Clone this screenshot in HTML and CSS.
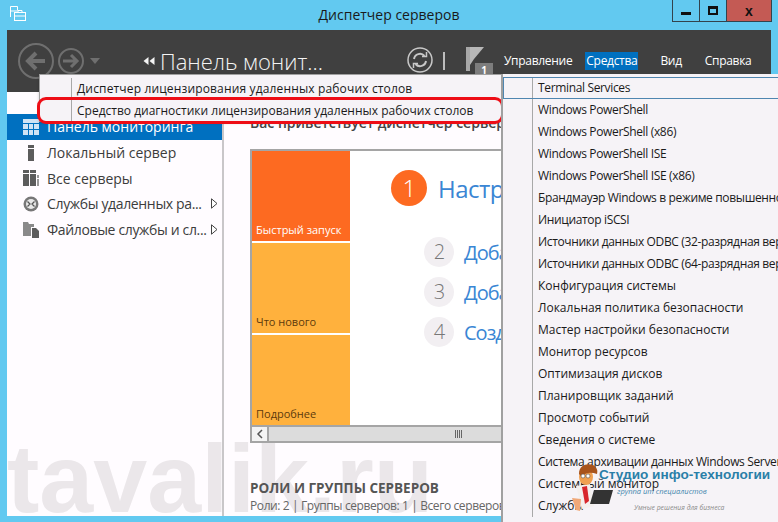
FILE: index.html
```html
<!DOCTYPE html>
<html lang="ru">
<head>
    <meta charset="UTF-8">
    <title>Диспетчер серверов</title>
    <link rel="stylesheet" href="styles.css">
</head>
<body>
    <!-- TITLE BAR -->
    <div class="titlebar">
        <svg class="app-icon" width="17" height="17" viewBox="0 0 17 17" fill="none" stroke="#fff" stroke-width="1">
            <path d="M1.500 12V1.500h7v4"/>
            <path d="M1.500 6h7"/>
            <rect x="5.500" y="7.500" width="11" height="8" fill="#62c9f0"/>
            <path d="M9 7.500V5.500h4v2M5.500 11h11"/>
        </svg>
        <div class="title">Диспетчер серверов</div>
        <div class="win-buttons">
            <div class="win-btn"><span class="ico-min"></span></div>
            <div class="win-btn"><span class="ico-max"></span></div>
            <div class="win-btn win-close">x</div>
        </div>
    </div>

    <div class="window">
        <!-- HEADER -->
        <div class="header">
            <svg class="nav-arrows" width="92" height="40" viewBox="0 0 92 40" fill="none" stroke="#6f6f6f">
                <circle cx="18" cy="20" r="17" stroke-width="2"/>
                <path d="M27 20H11M18 12l-8 8 8 8" stroke-width="4"/>
                <circle cx="53" cy="20" r="12" stroke-width="2"/>
                <path d="M45 20h14M53 14l6 6-6 6" stroke-width="3"/>
                <path d="M72 17h10l-5 6z" fill="#6f6f6f" stroke="none"/>
            </svg>
            <svg class="crumb-arrows" width="12" height="8" viewBox="0 0 12 8" fill="#f4f4f4">
                <path d="M5 0v8L0 4zM11 0v8L6 4z"/>
            </svg>
            <div class="crumb">Панель монит...</div>
            <svg class="refresh" width="26" height="26" viewBox="0 0 26 26" fill="none" stroke="#c8c8c8">
                <circle cx="13" cy="13" r="12" stroke-width="1.500"/>
                <path d="M7 12a6 6 0 0 1 10.500-3M19 14a6 6 0 0 1-10.500 3" stroke-width="2"/>
                <path d="M15 9.500h4.500V5M11 16.500H6.500V21" stroke-width="1.500"/>
            </svg>
            <div class="divider"></div>
            <div class="flag">
                <svg width="18" height="26" viewBox="0 0 18 26">
                    <path d="M0 0h4v24H0z" fill="#a8a8a8"/>
                    <path d="M4 0h14L8 12 4 18z" fill="#b8b8b8"/>
                </svg>
                <span class="flag-badge">1</span>
            </div>
            <div class="top-menu">
                <span>Управление</span>
                <span class="active">Средства</span>
                <span>Вид</span>
                <span>Справка</span>
            </div>
        </div>

        <div class="body">
            <div class="watermark">tavalik.ru</div>

            <!-- SIDEBAR -->
            <div class="sidebar">
                <div class="side-item selected">
                    <svg width="16" height="16" viewBox="0 0 16 16" fill="#cfe3f5"><path d="M0 0h16v4H0zM0 5h5v5H0zM6 5h4v5H6zM11 5h5v5h-5zM0 11h5v5H0zM6 11h4v5H6zM11 11h5v5h-5z"/></svg>
                    <span>Панель мониторинга</span>
                </div>
                <div class="side-item">
                    <svg width="16" height="16" viewBox="0 0 16 16" fill="#5c5c5c"><path d="M5 0h6v3H5zM5 4h6v12H5z"/></svg>
                    <span>Локальный сервер</span>
                </div>
                <div class="side-item">
                    <svg width="16" height="16" viewBox="0 0 16 16" fill="#5c5c5c"><path d="M0 0h6v3H0zM0 4h6v12H0zM7 0h6v3H7zM7 4h6v12H7z"/><path d="M14 5h2v3h-2zM14 9h2v7h-2z" fill="#999"/></svg>
                    <span>Все серверы</span>
                </div>
                <div class="side-item">
                    <svg width="16" height="16" viewBox="0 0 16 16"><circle cx="8" cy="8" r="7.500" fill="#777"/><circle cx="8" cy="8" r="5" fill="#e8e8e8"/><path d="M4.500 5.500L7 8l-2.500 2.500M11.500 5.500L9 8l2.500 2.500" fill="none" stroke="#555" stroke-width="1.300"/></svg>
                    <span class="side-label">Службы удаленных ра...</span>
                    <svg class="side-arrow" width="7" height="11" viewBox="0 0 7 11" fill="#fff" stroke="#444"><path d="M.5 .8v9.400L6 5.500z"/></svg>
                </div>
                <div class="side-item">
                    <svg width="16" height="16" viewBox="0 0 16 16"><path d="M0 0h5l1 2h5v3H8v9H0z" fill="#8a8a8a"/><path d="M9 6h4l3 3v7H9z" fill="#5c5c5c"/></svg>
                    <span class="side-label">Файловые службы и сл...</span>
                    <svg class="side-arrow" width="7" height="11" viewBox="0 0 7 11" fill="#fff" stroke="#444"><path d="M.5 .8v9.400L6 5.500z"/></svg>
                </div>
            </div>

            <!-- MAIN -->
            <div class="main">
                <div class="welcome">Вас приветствует диспетчер серверов</div>
                <div class="panel">
                    <div class="panel-inner">
                        <div class="tiles">
                            <div class="tile tile-orange">Быстрый запуск</div>
                            <div class="tile tile-yellow">Что нового</div>
                            <div class="tile tile-yellow">Подробнее</div>
                        </div>
                        <div class="steps">
                            <div class="step step-main"><b>1</b><span>Настроить этот</span></div>
                            <div class="step"><b>2</b><span>Добавить роли</span></div>
                            <div class="step"><b>3</b><span>Добавить</span></div>
                            <div class="step"><b>4</b><span>Создать группу</span></div>
                        </div>
                    </div>
                    <div class="hscroll">
                        <div class="hscroll-btn">
                            <svg width="8" height="10" viewBox="0 0 8 10" fill="none" stroke="#555" stroke-width="1.500"><path d="M6 1L2 5l4 4"/></svg>
                        </div>
                        <div class="hscroll-grip"><i></i><i></i><i></i><i></i></div>
                    </div>
                </div>
                <div class="roles-title">РОЛИ И ГРУППЫ СЕРВЕРОВ</div>
                <div class="roles-sub">Роли: 2 | Группы серверов: 1 | Всего серверов: 1</div>
            </div>
        </div>
    </div>

    <!-- LEFT POPUP MENU -->
    <div class="popup popup-left">
        <div class="popup-item wide">Диспетчер лицензирования удаленных рабочих столов</div>
        <div class="popup-item">Средство диагностики лицензирования удаленных рабочих столов</div>
    </div>
    <div class="red-mark"></div>

    <!-- TOOLS MENU -->
    <div class="popup popup-right">
        <div class="popup-item hot latin">Terminal Services</div>
        <div class="popup-item latin">Windows PowerShell</div>
        <div class="popup-item latin">Windows PowerShell (x86)</div>
        <div class="popup-item latin">Windows PowerShell ISE</div>
        <div class="popup-item latin">Windows PowerShell ISE (x86)</div>
        <div class="popup-item latin">Брандмауэр Windows в режиме повышенной безопасности</div>
        <div class="popup-item latin">Инициатор iSCSI</div>
        <div class="popup-item latin">Источники данных ODBC (32-разрядная версия)</div>
        <div class="popup-item latin">Источники данных ODBC (64-разрядная версия)</div>
        <div class="popup-item">Конфигурация системы</div>
        <div class="popup-item">Локальная политика безопасности</div>
        <div class="popup-item">Мастер настройки безопасности</div>
        <div class="popup-item">Монитор ресурсов</div>
        <div class="popup-item">Оптимизация дисков</div>
        <div class="popup-item">Планировщик заданий</div>
        <div class="popup-item">Просмотр событий</div>
        <div class="popup-item">Сведения о системе</div>
        <div class="popup-item latin">Система архивации данных Windows Server</div>
        <div class="popup-item">Системный монитор</div>
        <div class="popup-item">Службы</div>
    </div>

    <!-- LOGO -->
    <div class="logo">
        <svg class="mascot" width="46" height="54" viewBox="0 0 46 54">
            <path d="M6 24l14-2 4 22-12 3z" fill="#f4f0ee"/>
            <path d="M12 25l5-1 2 15-4 3z" fill="#d8262c"/>
            <ellipse cx="16" cy="15" rx="7" ry="8" fill="#f0a050"/>
            <path d="M9 12C9 3 17 1 23 3c4 2 5 6 4 9-6-2-12-2-15 3z" fill="#a8541c"/>
            <circle cx="13" cy="14" r="2" fill="#fff" stroke="#555" stroke-width=".6"/>
            <circle cx="18" cy="14" r="2" fill="#fff" stroke="#555" stroke-width=".6"/>
            <path d="M24 28h19l-4 14H20z" fill="#333"/>
            <path d="M2 36l9 1-1 12-4-1z" fill="#f0a878"/>
        </svg>
        <div class="logo-name">Студио инфо-технологии</div>
        <div class="logo-sub">группа ит специалистов</div>
        <div class="logo-slogan">Умные решения для бизнеса</div>
    </div>
</body>
</html>
```

FILE: styles.css
```css
/* GENERAL */
html, body {
    margin: 0;
    height: 522px;
    overflow: hidden;
}

body {
    position: relative;
    background-color: #62c9f0;
    font-family: "Open Sans", Arial, sans-serif;
    font-size: 12px;
    color: #222;
}

/* TITLE BAR */
.titlebar {
    display: flex;
    justify-content: center;
    height: 30px;
    position: relative;
}

.app-icon {
    position: absolute;
    left: 9px;
    top: 5px;
}

.title {
    font-size: 14px;
    line-height: 30px;
    color: #1a1a1a;
}

.win-buttons {
    position: absolute;
    right: 6px;
    top: 0;
    display: flex;
    height: 21px;
    border: 1px solid #33434c;
    border-top: none;
}

.win-btn {
    display: flex;
    align-items: center;
    justify-content: center;
    box-sizing: border-box;
    width: 27px;
    border-right: 1px solid #33434c;
}

.win-close {
    width: 44px;
    border-right: none;
    background-color: #c45a54;
    font-family: "Liberation Sans", sans-serif;
    font-weight: bold;
    font-size: 14px;
    line-height: 16px;
    color: #111;
}

.ico-min {
    width: 10px;
    height: 3px;
    margin-top: 5px;
    background: #111;
}

.ico-max {
    width: 6px;
    height: 4px;
    border: 2px solid #111;
    border-top-width: 3px;
}

/* WINDOW */
.window {
    margin: 0 7px;
    height: 486px;
    display: flex;
    flex-direction: column;
    background-color: #fffcff;
}

/* HEADER */
.header {
    flex: none;
    height: 62px;
    background-color: #404040;
    display: flex;
    align-items: flex-start;
    padding-left: 11px;
    box-sizing: border-box;
    color: #fff;
}

.header > * {
    flex: none;
}

.nav-arrows {
    margin-top: 11px;
}

.crumb-arrows {
    margin: 27px 0 0 29px;
    width: 21px;
}

.crumb {
    width: 247px;
    margin-top: 15px;
    font-size: 22px;
    line-height: 32px;
    font-weight: 300;
    white-space: nowrap;
    color: #f4f4f4;
}

.refresh {
    margin-top: 17px;
}

.divider {
    width: 2px;
    height: 18px;
    margin: 22px 0 0 10px;
    background: #bdbdbd;
}

.flag {
    position: relative;
    width: 37px;
    height: 30px;
    margin: 17px 0 0 21px;
}

.flag-badge {
    position: absolute;
    left: 9px;
    top: 16px;
    width: 18px;
    height: 12px;
    background: #7d7d7d;
    font-size: 10px;
    font-weight: bold;
    line-height: 14px;
    text-align: center;
}

.top-menu {
    display: flex;
    gap: 21px;
    margin-top: 22px;
    line-height: 18px;
    letter-spacing: -0.3px;
}

.top-menu span {
    padding: 0 1px;
}

.top-menu .active {
    background-color: #0070c0;
    margin-left: -9px;
}

/* SIDEBAR + MAIN */
.body {
    flex: 1;
    display: flex;
    position: relative;
    min-height: 0;
    overflow: hidden;
}

.watermark {
    position: absolute;
    left: 0;
    bottom: -18px;
    font-family: "Liberation Sans", Arial, sans-serif;
    font-weight: bold;
    font-size: 97px;
    line-height: 110px;
    color: #ebe7ea;
    white-space: nowrap;
}

.sidebar {
    flex: none;
    position: relative;
    width: 217px;
    padding-top: 22px;
    box-sizing: border-box;
    border-right: 2px solid #c9c7c9;
}

.side-item {
    display: flex;
    align-items: center;
    height: 25.7px;
    padding-left: 16px;
    font-size: 14px;
    color: #3c3c3c;
    white-space: nowrap;
}

.side-item svg {
    margin-right: 8px;
    flex: none;
}

.side-item.selected {
    background-color: #0070c0;
    color: #fff;
}

.side-label {
    flex: 1;
    letter-spacing: -0.35px;
}

.side-item .side-arrow {
    margin-right: 4px;
}

.main {
    flex: 1;
    position: relative;
    overflow: hidden;
    padding-left: 26px;
    min-width: 0;
}

.welcome {
    margin-top: 21px;
    height: 36px;
    font-size: 14px;
    font-weight: 600;
    color: #444;
    white-space: nowrap;
}

.panel {
    width: 560px;
    height: 294px;
    border: 2px solid #a5a5a5;
    box-sizing: border-box;
    background: #fff;
    display: flex;
    flex-direction: column;
}

.panel-inner {
    flex: 1;
    display: flex;
}

.tiles {
    width: 98px;
    display: flex;
    flex-direction: column;
    gap: 2px;
}

.tile {
    height: 90px;
    box-sizing: border-box;
    display: flex;
    align-items: flex-end;
    padding: 0 0 4px 4px;
    font-size: 11px;
    color: #5d3a0c;
}

.tile-orange {
    background-color: #fd6a21;
    color: #fff;
}

.tile-yellow {
    background-color: #ffb13d;
}

.steps {
    flex: 1;
    display: flex;
    flex-direction: column;
    padding: 19px 0 0 41px;
}

.step {
    display: flex;
    align-items: center;
    margin: 0 0 10px 33px;
    color: #3a86d4;
    font-size: 20px;
    letter-spacing: -1px;
    white-space: nowrap;
}

.step b {
    width: 30px;
    height: 30px;
    margin-right: 10px;
    border-radius: 50%;
    background: #f2eff2;
    color: #777;
    font-weight: 300;
    text-align: center;
    line-height: 29px;
}

.step-main {
    margin: 0 0 31px;
    font-size: 24px;
    letter-spacing: -0.5px;
}

.step-main b {
    width: 36px;
    height: 36px;
    margin-right: 11px;
    background: #fd6a21;
    color: #fff;
    line-height: 35px;
}

.hscroll {
    flex: none;
    display: flex;
    height: 16px;
    border-top: 2px solid #a5a5a5;
    background: #dcdcdc;
    box-sizing: border-box;
}

.hscroll-btn {
    display: flex;
    align-items: center;
    justify-content: center;
    width: 15px;
    background: #f4f4f4;
    border-right: 2px solid #a5a5a5;
}

.hscroll-grip {
    display: flex;
    gap: 1px;
    margin: 3px 0 0 186px;
}

.hscroll-grip i {
    width: 1px;
    height: 8px;
    background: #666;
}

.roles-title {
    margin-top: 36px;
    font-size: 13.5px;
    font-weight: 700;
    line-height: 18px;
    color: #555;
    white-space: nowrap;
}

.roles-sub {
    font-size: 12px;
    line-height: 18px;
    letter-spacing: -0.4px;
    color: #666;
    white-space: nowrap;
}

/* POPUP MENUS */
.popup {
    position: absolute;
    top: 74px;
    box-sizing: border-box;
    background-color: #f6f3f7;
    font-size: 12px;
    color: #1a1a1a;
}

.popup-item {
    height: 22px;
    line-height: 22px;
    white-space: nowrap;
    position: relative;
}

.popup-item::before {
    content: "";
    position: absolute;
    top: 0;
    bottom: 0;
    width: 1px;
    background: #a8a8a8;
}

.wide {
    letter-spacing: 0.15px;
}

.latin {
    letter-spacing: -0.35px;
}

.popup-left {
    left: 39px;
    width: 462px;
    height: 48px;
    padding-top: 3px;
    border: 1px solid #a0a0a0;
    border-right: none;
    box-shadow: 0 1px 3px rgba(0, 0, 0, 0.2);
}

.popup-left .popup-item {
    padding-left: 37px;
}

.popup-left .popup-item::before {
    left: 31px;
}

.popup-right {
    left: 501px;
    right: 0;
    height: 448px;
    padding-top: 3px;
    border-left: 2px solid #a0a0a0;
    overflow: hidden;
}

.popup-right .popup-item {
    padding-left: 35px;
}

.popup-right .popup-item::before {
    left: 29px;
}

.popup-right .hot {
    box-sizing: border-box;
    line-height: 20px;
    border: 1px solid #4f86b0;
    border-right: none;
    padding-left: 34px;
}

.popup-right .hot::before {
    left: 28px;
}

.red-mark {
    position: absolute;
    left: 37px;
    top: 97px;
    width: 467px;
    height: 27px;
    box-sizing: border-box;
    border: 3px solid #ee0d16;
    border-radius: 9px;
}

/* LOGO */
.logo {
    position: absolute;
    left: 570px;
    top: 462px;
    width: 208px;
    height: 60px;
}

.mascot {
    position: absolute;
    left: 0;
    top: 0;
}

.logo-name {
    position: absolute;
    left: 29px;
    top: 4px;
    font-family: "Liberation Sans", Arial, sans-serif;
    font-size: 13.6px;
    font-weight: bold;
    line-height: 18px;
    color: #2a7fa8;
    white-space: nowrap;
}

.logo-sub {
    position: absolute;
    left: 47px;
    top: 24px;
    font-size: 7.5px;
    font-style: italic;
    color: #3f86ad;
    white-space: nowrap;
}

.logo-slogan {
    position: absolute;
    left: 64px;
    top: 41px;
    font-size: 6.8px;
    font-style: italic;
    color: #8a8a8a;
    white-space: nowrap;
}
```
